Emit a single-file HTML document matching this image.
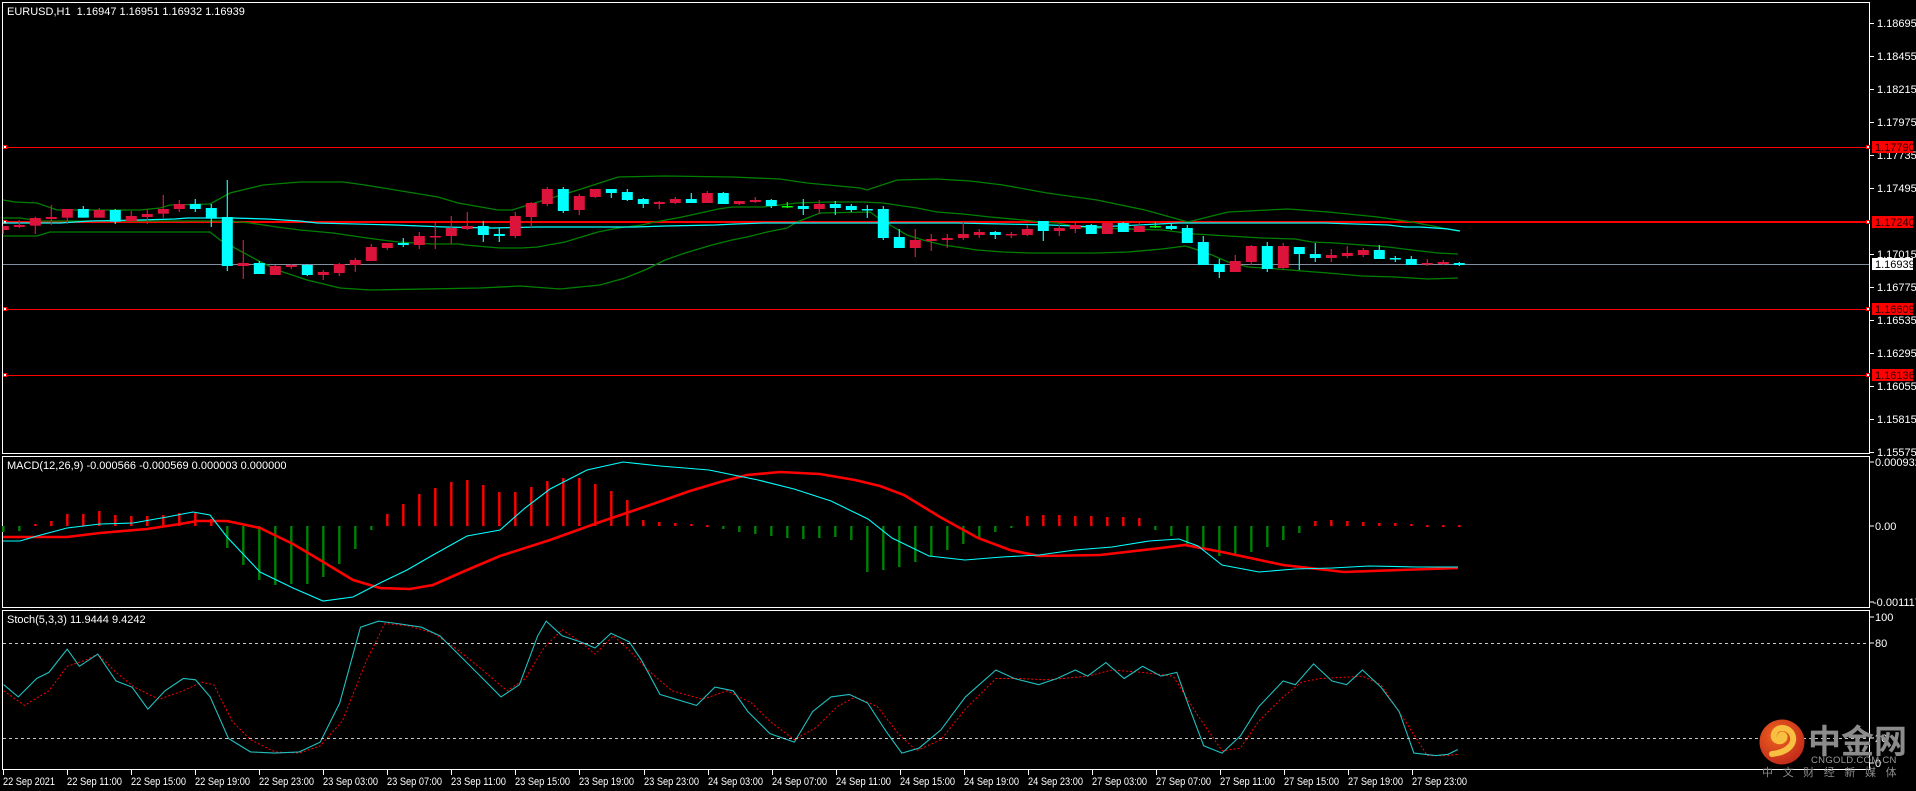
<!DOCTYPE html>
<html><head><meta charset="utf-8"><style>
html,body{margin:0;padding:0;background:#000;width:1916px;height:791px;overflow:hidden}
svg{display:block}
text{font-family:"Liberation Sans","Noto Sans CJK SC",sans-serif;font-size:11px;fill:#fff}
</style></head><body>
<svg id="s" width="1916" height="791" viewBox="0 0 1916 791" xmlns="http://www.w3.org/2000/svg">
<rect width="1916" height="791" fill="#000"/>
<g stroke="#fff" stroke-width="1" fill="none">
<rect x="2.5" y="2.5" width="1867" height="451"/>
<rect x="2.5" y="456.5" width="1867" height="151"/>
<rect x="2.5" y="610.5" width="1867" height="159"/>
</g>
<g id="pax"></g>
<g stroke="#ff0000">
<line x1="3" y1="147.5" x2="1869" y2="147.5" stroke-width="1"/>
<line x1="3" y1="222" x2="1869" y2="222" stroke-width="2"/>
<line x1="3" y1="309.5" x2="1869" y2="309.5" stroke-width="1"/>
<line x1="3" y1="375.5" x2="1869" y2="375.5" stroke-width="1"/>
</g>
<line x1="3" y1="264.5" x2="1869" y2="264.5" stroke="#8090a0" stroke-width="1"/>
<g fill="#fff" stroke="#ff0000" stroke-width="1">
<rect x="3.5" y="145.5" width="3" height="3"/><rect x="1866.5" y="145.5" width="3" height="3"/>
<rect x="3.5" y="220.5" width="3" height="3"/><rect x="1866.5" y="220.5" width="3" height="3"/>
<rect x="3.5" y="307.5" width="3" height="3"/><rect x="1866.5" y="307.5" width="3" height="3"/>
<rect x="3.5" y="373.5" width="3" height="3"/><rect x="1866.5" y="373.5" width="3" height="3"/>
</g>
<g id="bands" fill="none"></g>
<g id="candles"></g>
<g id="macd"></g>
<g id="stoch"></g>
<g stroke="#c8c8c8" stroke-dasharray="3,3" stroke-width="1">
<line x1="3" y1="643.5" x2="1869" y2="643.5"/>
<line x1="3" y1="738.5" x2="1869" y2="738.5"/>
</g>
<text x="7" y="15">EURUSD,H1&#160;&#160;1.16947 1.16951 1.16932 1.16939</text>
<text x="7" y="469">MACD(12,26,9) -0.000566 -0.000569 0.000003 0.000000</text>
<text x="7" y="623">Stoch(5,3,3) 11.9444 9.4242</text>
<rect x="1872" y="141" width="41" height="12" fill="#ff0000"/><text x="1875" y="151" style="fill:#200">1.17790</text>
<rect x="1872" y="216" width="41" height="12" fill="#ff0000"/><text x="1875" y="226" style="fill:#200">1.17240</text>
<rect x="1872" y="258" width="41" height="12" fill="#fff"/><text x="1875" y="268" style="fill:#000">1.16939</text>
<rect x="1872" y="303" width="41" height="12" fill="#ff0000"/><text x="1875" y="313" style="fill:#200">1.16609</text>
<rect x="1872" y="369" width="41" height="12" fill="#ff0000"/><text x="1875" y="379" style="fill:#200">1.16136</text>
<g stroke="#fff"><line x1="1870" y1="462" x2="1874" y2="462"/><line x1="1870" y1="526" x2="1874" y2="526"/><line x1="1870" y1="602" x2="1874" y2="602"/>
<line x1="1870" y1="617" x2="1874" y2="617"/><line x1="1870" y1="643" x2="1874" y2="643"/><line x1="1870" y1="738" x2="1874" y2="738"/><line x1="1870" y1="763" x2="1874" y2="763"/></g>
<text x="1875" y="466">0.000932</text>
<text x="1875" y="530">0.00</text>
<text x="1873" y="606">-0.001117</text>
<text x="1875" y="621">100</text>
<text x="1875" y="647">80</text>
<text x="1875" y="742">20</text>
<text x="1875" y="767">0</text>
<g id="tax"></g>
<defs><radialGradient id="lg" cx="0.4" cy="0.35" r="0.7"><stop offset="0" stop-color="#f0641e"/><stop offset="1" stop-color="#c0281a"/></radialGradient></defs>
<circle cx="1782" cy="742" r="22.5" fill="url(#lg)"/>
<path d="M1772 754 C1790 752 1796 742 1792 734 C1788 726 1776 726 1774 734 C1772 740 1780 744 1784 739 C1786 735 1782 733 1780 736" fill="none" stroke="#f8c040" stroke-width="6" stroke-linecap="round"/>
<text x="1808" y="753" style="font-size:33px;font-weight:bold;fill:#8c8c8c;font-family:'Noto Sans CJK SC',sans-serif">中金网</text>
<text x="1811" y="763" style="font-size:9.5px;fill:#9a9a9a;letter-spacing:0.3px">CNGOLD.COM.CN</text>
<text x="1762" y="776" style="font-size:11px;fill:#8a8a8a;letter-spacing:9.6px;font-family:'Noto Sans CJK SC',sans-serif">中文财经新媒体</text>
</svg>
<script>
var NS="http://www.w3.org/2000/svg";
function el(p,t,a){var e=document.createElementNS(NS,t);for(var k in a)e.setAttribute(k,a[k]);p.appendChild(e);return e;}
function $(i){return document.getElementById(i);}
var pax=$("pax");
var pl=["1.18695","1.18455","1.18215","1.17975","1.17735","1.17495","1.17015","1.16775","1.16535","1.16295","1.16055","1.15815","1.15575"];
pl.forEach(function(p){var y=Math.round(23+(1.18695-parseFloat(p))*13750);
 el(pax,"line",{x1:1870,y1:y+.5,x2:1874,y2:y+.5,stroke:"#fff"});
 var t=el(pax,"text",{x:1877,y:y+4});t.textContent=p;});
var tax=$("tax");
var tl=["22 Sep 2021","22 Sep 11:00","22 Sep 15:00","22 Sep 19:00","22 Sep 23:00","23 Sep 03:00","23 Sep 07:00","23 Sep 11:00","23 Sep 15:00","23 Sep 19:00","23 Sep 23:00","24 Sep 03:00","24 Sep 07:00","24 Sep 11:00","24 Sep 15:00","24 Sep 19:00","24 Sep 23:00","27 Sep 03:00","27 Sep 07:00","27 Sep 11:00","27 Sep 15:00","27 Sep 19:00","27 Sep 23:00"];
tl.forEach(function(s,i){var x=Math.round(3+64.05*i);
 el(tax,"line",{x1:x+.5,y1:770,x2:x+.5,y2:775,stroke:"#fff"});
 var t=el(tax,"text",{x:x,y:785,textLength:(i==0?52:55),lengthAdjust:"spacingAndGlyphs"});t.textContent=s;});
var C=[["r",168,180,168,192],["r",165,171,150,174],["r",144,167,140,192],["r",141,147,105,165],["r",117,143,117,162],["c",117,143,108,143],["r",120,143,114,143],["c",120,155,117,162],["r",138,153,123,156],["r",132,141,117,162],["r",117,131,75,144],["r",102,117,90,126],["c",102,117,87,126],["c",114,146,102,171],["c",141,288,30,303],["r",279,288,210,327],["c",279,312,273,312],["r",288,315,285,315],["r",285,291,282,297],["c",285,315,282,318],["r",306,315,300,330],["r",282,309,279,318],["r",270,285,264,306],["r",231,273,222,273],
["r",219,234,219,240],["c",219,225,204,231],["r",198,225,186,237],["r",198,201,156,237],["r",174,198,138,222],["r",168,177,126,180],["c",168,195,153,216],["c",192,198,174,216],["r",138,198,126,204],["r",99,141,96,174],["r",57,102,51,108],["c",57,123,51,129],["r",78,120,72,135],["r",57,81,57,84],["c",57,69,57,84],["c",66,90,57,93],["c",87,102,84,114],["r",96,102,93,117],["r",87,99,81,102],["c",87,99,69,99],["r",69,99,63,99],["c",69,102,66,102],
["r",93,102,93,105],["r",90,96,81,99],["c",90,108,87,114],["g",108,111,96,114],["c",108,117,87,135],["r",102,117,90,132],["c",102,114,93,135],["c",108,120,102,126],["c",117,119,105,144],["c",117,204,108,210],["c",201,234,177,234],["r",210,234,177,261],["r",207,213,192,243],["r",204,210,192,234],["r",192,204,153,210],["r",186,195,177,204],["c",186,195,183,207],["r",192,195,186,204],["r",177,195,165,198],["c",153,183,153,213],["r",174,183,165,198],["r",165,177,159,189],["c",165,192,162,192],
["r",159,192,156,192],["c",159,186,156,186],["r",168,186,159,186],["g",168,171,156,174],["c",168,177,162,180],["c",174,219,165,219],["c",216,285,198,285],["c",282,306,267,324],["r",273,306,255,306],["r",228,276,225,285],["c",228,297,216,306],["r",228,294,219,297],["c",231,252,231,300],["c",252,264,219,276],["r",255,264,237,276],["r",249,258,228,264],["r",240,255,234,261],["c",240,267,225,267],["c",264,267,258,276],["c",267,285,258,285],["r",279,282,267,288],["r",276,282,270,285],["c",279,285,276,288]];
var col={r:"#dc143c",c:"#00ffff",g:"#00ff00"};
var bands=$("bands");
function poly(g,pts,attrs){attrs.points=pts.map(function(p){return p[0]+","+p[1];}).join(" ");return el(g,"polyline",attrs);}
var up=[[3,200],[15,202],[37,203],[57,210],[140,210],[160,208],[170,205],[210,204],[230,193],[263,185],[300,182],[343,182],[365,185],[438,197],[458,203],[498,210],[512,210],[538,202],[578,190],[618,177],[665,176],[732,177],[780,179],[807,183],[860,188],[867,190],[897,180],[937,179],[970,181],[1003,185],[1047,193],[1097,200],[1145,210],[1188,222],[1228,212],[1288,209],[1328,212],[1378,217],[1412,222],[1458,231]];
var mid=[[3,218],[20,218],[40,221],[230,221],[250,223],[277,227],[300,230],[333,233],[367,238],[382,240],[398,242],[432,244],[458,244],[465,245],[488,247],[500,248],[522,248],[538,247],[548,245],[565,242],[578,238],[598,232],[618,228],[642,225],[655,222],[682,217],[705,212],[718,209],[732,207],[763,207],[797,203],[830,202],[863,202],[883,203],[903,206],[917,208],[937,212],[963,214],[990,217],[1023,220],[1040,222],[1057,223],[1080,227],[1097,228],[1162,230],[1178,232],[1195,234],[1228,236],[1262,238],[1295,239],[1312,242],[1335,243],[1362,245],[1388,247],[1412,250],[1438,253],[1458,254]];
var lo=[[3,236],[37,236],[50,232],[210,232],[220,240],[233,247],[257,260],[277,270],[307,280],[340,288],[370,290],[480,288],[520,286],[560,289],[600,285],[625,278],[645,270],[665,260],[685,253],[712,245],[732,240],[747,237],[767,232],[787,228],[797,222],[820,213],[870,212],[877,217],[890,225],[907,235],[923,240],[943,245],[957,247],[977,250],[1003,252],[1030,253],[1095,253],[1128,252],[1162,249],[1185,246],[1192,248],[1212,255],[1228,262],[1248,267],[1278,269],[1302,271],[1328,273],[1362,276],[1395,277],[1428,279],[1458,278]];
[up,mid,lo].forEach(function(b){poly(bands,b,{stroke:"#008000","stroke-width":1.3});});
var ma=[[3,223],[60,223],[90,221],[140,220],[175,219],[187,218],[233,218],[267,219],[300,221],[317,223],[395,225],[445,227],[492,228],[538,227],[635,227],[665,226],[715,225],[735,224],[763,223],[810,223],[908,223],[957,223],[1003,224],[1050,225],[1097,227],[1178,223],[1260,223],[1325,223],[1355,224],[1388,225],[1405,227],[1420,227],[1435,228],[1448,229],[1460,231]];
poly(bands,ma,{stroke:"#00ffff","stroke-width":1.2});
var cg=$("candles");
C.forEach(function(c,k){var x=3.3+16*k;var y0=170+c[1]/3,y1=170+c[2]/3,w0=170+c[3]/3,w1=170+c[4]/3;
 el(cg,"line",{x1:x,y1:w0,x2:x,y2:w1,stroke:col[c[0]],"stroke-width":1.2});
 var h=Math.max(1.5,y1-y0);var bx=Math.max(3,x-5.5);
 el(cg,"rect",{x:bx,y:y0,width:x+5.5-bx,height:h,fill:col[c[0]]});});
var H=[532,531,524,521,514,514,511,515,516,516,515,513,513,519,548,565,580,585,584,584,577,564,549,530,514,504,494,488,482,480,485,492,492,487,481,478,478,484,491,500,520,522,523,524,525,529,532,534,536,538,539,538,537,540,572,570,567,562,556,550,544,538,532,528,516,515,515,516,516,517,517,518,530,536,544,550,556,556,552,547,540,533,521,520,521,522,523,523,524,525,525,525];
var mg=$("macd");
H.forEach(function(v,k){var x=3.3+16*k;var neg=v>526;var top=Math.min(v,526),bot=Math.max(v,526);if(bot-top<2){bot=top+2;}
 el(mg,"rect",{x:x-1.2,y:top,width:2.4,height:bot-top,fill:neg?"#008000":"#ff0000"});});
var mcy=[[3,541],[20,541],[37,536],[67,528],[100,524],[133,523],[167,517],[193,512],[210,515],[227,537],[260,572],[293,588],[323,601],[353,597],[380,583],[407,570],[433,555],[467,536],[500,530],[525,508],[550,489],[587,470],[623,462],[660,466],[709,470],[758,480],[794,489],[831,501],[868,519],[892,538],[929,556],[965,560],[1002,557],[1039,555],[1075,550],[1112,547],[1149,541],[1179,539],[1198,546],[1222,565],[1259,572],[1295,569],[1332,568],[1369,566],[1418,567],[1458,567]];
var msg=[[3,537],[67,537],[100,533],[147,529],[180,524],[197,521],[227,521],[260,528],[293,544],[320,560],[353,580],[380,588],[410,589],[433,585],[467,570],[500,556],[550,540],[600,522],[650,505],[690,491],[720,482],[747,475],[780,472],[820,474],[855,480],[880,486],[904,495],[940,517],[978,538],[1010,550],[1039,556],[1100,555],[1161,548],[1185,545],[1222,552],[1283,565],[1344,572],[1400,570],[1458,568]];
poly(mg,msg,{stroke:"#ff0000","stroke-width":2.6,fill:"none"});
poly(mg,mcy,{stroke:"#00ffff","stroke-width":1.1,fill:"none"});
var sc=[[3,560],[15,570],[30,555],[40,550],[55,531],[65,545],[80,535],[95,557],[108,562],[121,580],[135,565],[150,555],[160,556],[172,570],[187,604],[205,615],[225,616],[245,615],[262,607],[278,575],[295,513],[310,508],[325,510],[345,513],[360,520],[375,535],[390,550],[410,570],[425,560],[440,520],[447,508],[460,520],[475,525],[487,530],[500,518],[515,525],[525,540],[540,568],[570,577],[585,562],[600,565],[612,582],[630,600],[650,607],[665,582],[680,570],[695,568],[710,575],[725,598],[738,616],[752,612],[770,597],[790,570],[815,548],[830,555],[850,560],[865,555],[880,548],[890,553],[905,542],[920,555],[935,545],[950,553],[963,550],[973,578],[985,610],[1000,616],[1015,602],[1030,578],[1050,557],[1060,560],[1075,543],[1090,557],[1102,560],[1115,548],[1130,562],[1145,582],[1157,616],[1175,618],[1185,617],[1193,613]];
var sr=[[3,565],[20,577],[40,565],[55,545],[70,540],[80,535],[95,550],[110,562],[130,572],[150,565],[165,558],[175,560],[190,590],[205,605],[225,615],[245,616],[262,610],[280,590],[300,540],[315,510],[335,512],[355,518],[375,532],[395,548],[415,565],[430,555],[445,530],[460,515],[475,525],[487,535],[502,520],[515,532],[530,548],[550,565],[575,572],[595,565],[615,575],[630,590],[650,605],[668,595],[685,578],[700,570],[718,578],[735,600],[750,614],[770,605],[790,580],[815,555],[835,555],[855,556],[870,555],[890,553],[910,548],[935,550],[960,553],[980,585],[1000,614],[1015,612],[1030,590],[1050,570],[1065,558],[1080,555],[1100,554],[1115,553],[1130,560],[1150,590],[1168,618],[1185,618],[1193,617]];
function sc2(a){return a.map(function(p){return [(p[0]*1.222).toFixed(1),(p[1]*1.2226).toFixed(1)];});}
var sg=$("stoch");
poly(sg,sc2(sr),{stroke:"#ff0000","stroke-width":1,"stroke-dasharray":"2,2",fill:"none"});
poly(sg,sc2(sc),{stroke:"#20c0c0","stroke-width":1.1,fill:"none"});
</script>
</body></html>
